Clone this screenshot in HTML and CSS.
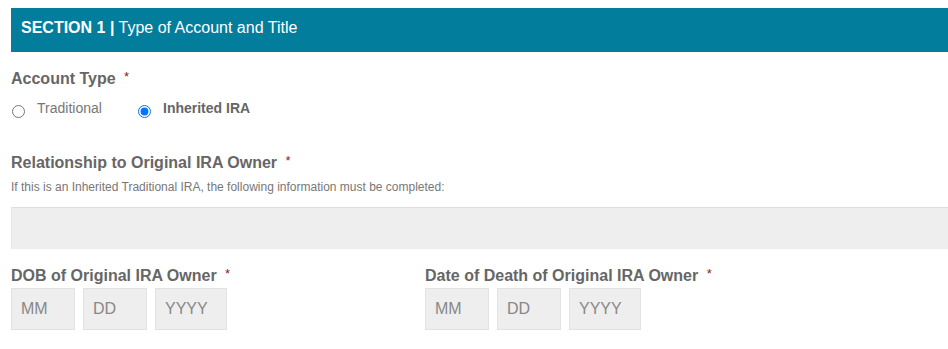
FILE: index.html
```html
<!DOCTYPE html>
<html lang="en">

<head>
    <meta charset="UTF-8">
    <meta name="viewport" content="width=device-width, initial-scale=1.0">
    <title>section 1</title>
    <link rel="stylesheet" href="styles.css">
</head>

<body>
    <div class="section-head"><b>SECTION 1 |</b> Type of Account and Title</div>

    <div class="field account">
        <label class="label">Account Type <span class="req">*</span></label>
        <div class="radios">
            <label class="radio"><input type="radio" name="acct"> Traditional</label>
            <label class="radio checked"><input type="radio" name="acct" checked> Inherited IRA</label>
        </div>
    </div>

    <div class="field relation">
        <label class="label">Relationship to Original IRA Owner <span class="req">*</span></label>
        <p class="hint">If this is an Inherited Traditional IRA, the following information must be completed:</p>
        <select class="select"></select>
    </div>

    <div class="dates">
        <div class="field">
            <label class="label">DOB of Original IRA Owner <span class="req">*</span></label>
            <div class="date-row">
                <input type="text" class="mm" placeholder="MM">
                <input type="text" class="dd" placeholder="DD">
                <input type="text" class="yyyy" placeholder="YYYY">
            </div>
        </div>
        <div class="field">
            <label class="label">Date of Death of Original IRA Owner <span class="req">*</span></label>
            <div class="date-row">
                <input type="text" class="mm" placeholder="MM">
                <input type="text" class="dd" placeholder="DD">
                <input type="text" class="yyyy" placeholder="YYYY">
            </div>
        </div>
    </div>
</body>

</html>
```

FILE: styles.css
```css
body {
    margin: 8px 0 0 11px;
    font-family: "Liberation Sans", Arial, sans-serif;
    color: #666;
    background: #fff;
}

.section-head {
    background: #027d9c;
    color: #fff;
    height: 44px;
    line-height: 39px;
    padding-left: 10px;
    font-size: 16px;
}

.account {
    margin-top: 18px;
}

.relation {
    margin-top: 36px;
}

.dates {
    display: grid;
    grid-template-columns: 414px 414px;
    margin-top: 18px;
}

.label {
    display: block;
    font-size: 16px;
    line-height: 18px;
    font-weight: bold;
    color: #666;
}

.req {
    color: #8b1c1c;
    font-weight: normal;
    font-size: 13px;
    margin-left: 4px;
    vertical-align: top;
    line-height: 14px;
}

.radios {
    display: flex;
    margin-top: 12px;
}

.radio {
    display: flex;
    align-items: flex-start;
    font-size: 14px;
    line-height: 16px;
    width: 126px;
    color: #777;
}

.radio input {
    margin: 5px 12px 0 1px;
    width: 13px;
    height: 13px;
}

.radio.checked {
    font-weight: bold;
    color: #666;
}

.hint {
    margin: 8px 0 0;
    font-size: 12px;
    line-height: 14px;
    color: #777;
}

.select {
    display: block;
    margin-top: 13px;
    width: 100%;
    height: 42px;
    border: none;
    border-top: 1px solid #dedede;
    border-left: 1px solid #e6e6e6;
    background: #eee;
    appearance: none;
}

.date-row {
    display: flex;
    gap: 8px;
    margin-top: 3px;
}

.date-row input {
    box-sizing: border-box;
    height: 42px;
    width: 64px;
    border: 1px solid #e2e2e2;
    background: #eee;
    padding: 0 9px;
    font-size: 16px;
    font-family: "Liberation Sans", Arial, sans-serif;
    outline: none;
}

.date-row input.yyyy {
    width: 72px;
}

.date-row input::placeholder {
    color: #888;
}
```
